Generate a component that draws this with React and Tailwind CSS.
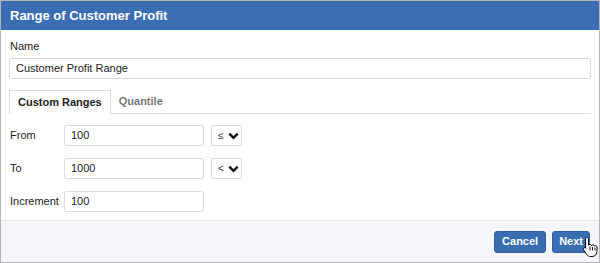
import React from 'react';

const HandCursor = () => (
  <svg width="16" height="22" viewBox="0 0 16 22" className="absolute left-[30px] top-[5px]">
    <path
      d="M5 1.5c.8 0 1.5.7 1.5 1.5v6.2c.3-.6.9-.9 1.5-.9.8 0 1.4.5 1.5 1.2.3-.4.8-.7 1.4-.7.8 0 1.4.6 1.5 1.3.3-.3.7-.5 1.1-.5.9 0 1.5.7 1.5 1.5v4.4c0 2.9-2.2 5-5 5H8.5c-1.6 0-2.8-.7-3.7-2L1.6 14c-.5-.7-.3-1.6.4-2 .6-.4 1.4-.3 1.9.3l-.4-.4V3c0-.8.7-1.5 1.5-1.5z"
      fill="#fff"
      stroke="#000"
      strokeWidth="1"
      strokeLinejoin="round"
    />
    <path d="M8 10.5v4M10.5 11v3.5M13 11.5v3" stroke="#000" strokeWidth="0.9" />
  </svg>
);

const RangeRow = ({ label, value, op }) => (
  <div className="flex items-center h-[21px]">
    <div className="w-[55px] pl-px">{label}</div>
    <div className="w-[140px] h-[21px] border border-[#dcdcdc] rounded-[2px] flex items-center px-[6px] text-[#222]">
      {value}
    </div>
    {op && (
      <div className="ml-[7px] w-[31px] h-[21px] border border-[#dcdcdc] rounded-[2px] flex items-center pl-[6px] gap-[4px]">
        <span className="text-[10px] text-[#333] w-[6px]">{op}</span>
        <svg width="11" height="8" viewBox="0 0 11 8">
          <path d="M1.3 1.6 5.5 5.8l4.2-4.2" fill="none" stroke="#111" strokeWidth="2.4" />
        </svg>
      </div>
    )}
  </div>
);

export default function App() {
  return (
    <div className="w-[600px] h-[263px] bg-white border border-[#b4b4b4] flex flex-col font-['Liberation_Sans',Arial,sans-serif] text-[11px] text-[#222]">
      <div className="h-[29px] bg-[#3a6db2] text-white font-bold text-[13px] flex items-center pl-[9px]">
        Range of Customer Profit
      </div>

      <div className="flex-1 px-[8px] pt-[9px]">
        <div className="pl-px h-[14px] leading-[14px]">Name</div>
        <div className="mt-[5px] h-[21px] border border-[#dcdcdc] rounded-[2px] flex items-center px-[6px]">
          Customer Profit Range
        </div>

        <div className="mt-[11px] flex items-end h-[24px] border-b border-[#dcdcdc]">
          <div className="h-[24px] px-[8px] border border-b-0 border-[#dcdcdc] bg-white flex items-center font-bold -mb-px pb-px">
            Custom Ranges
          </div>
          <div className="h-[24px] pl-[8px] flex items-center font-bold text-[#777]">Quantile</div>
        </div>

        <div className="mt-[11px] flex flex-col gap-[12px]">
          <RangeRow label="From" value="100" op="≤" />
          <RangeRow label="To" value="1000" op="<" />
          <RangeRow label="Increment" value="100" />
        </div>
      </div>

      <div className="h-[42px] bg-[#f5f6fa] border-t border-[#e8e9ee] flex items-center justify-end gap-[6px] pr-[9px]">
        <button className="h-[22px] px-[7px] bg-[#3a6db2] text-white font-bold rounded-[3px] border border-[#2f5f9f]">
          Cancel
        </button>
        <div className="relative">
          <button className="h-[22px] px-[6px] bg-[#3a6db2] text-white font-bold rounded-[3px] border border-[#2f5f9f]">
            Next
          </button>
          <HandCursor />
        </div>
      </div>
    </div>
  );
}
